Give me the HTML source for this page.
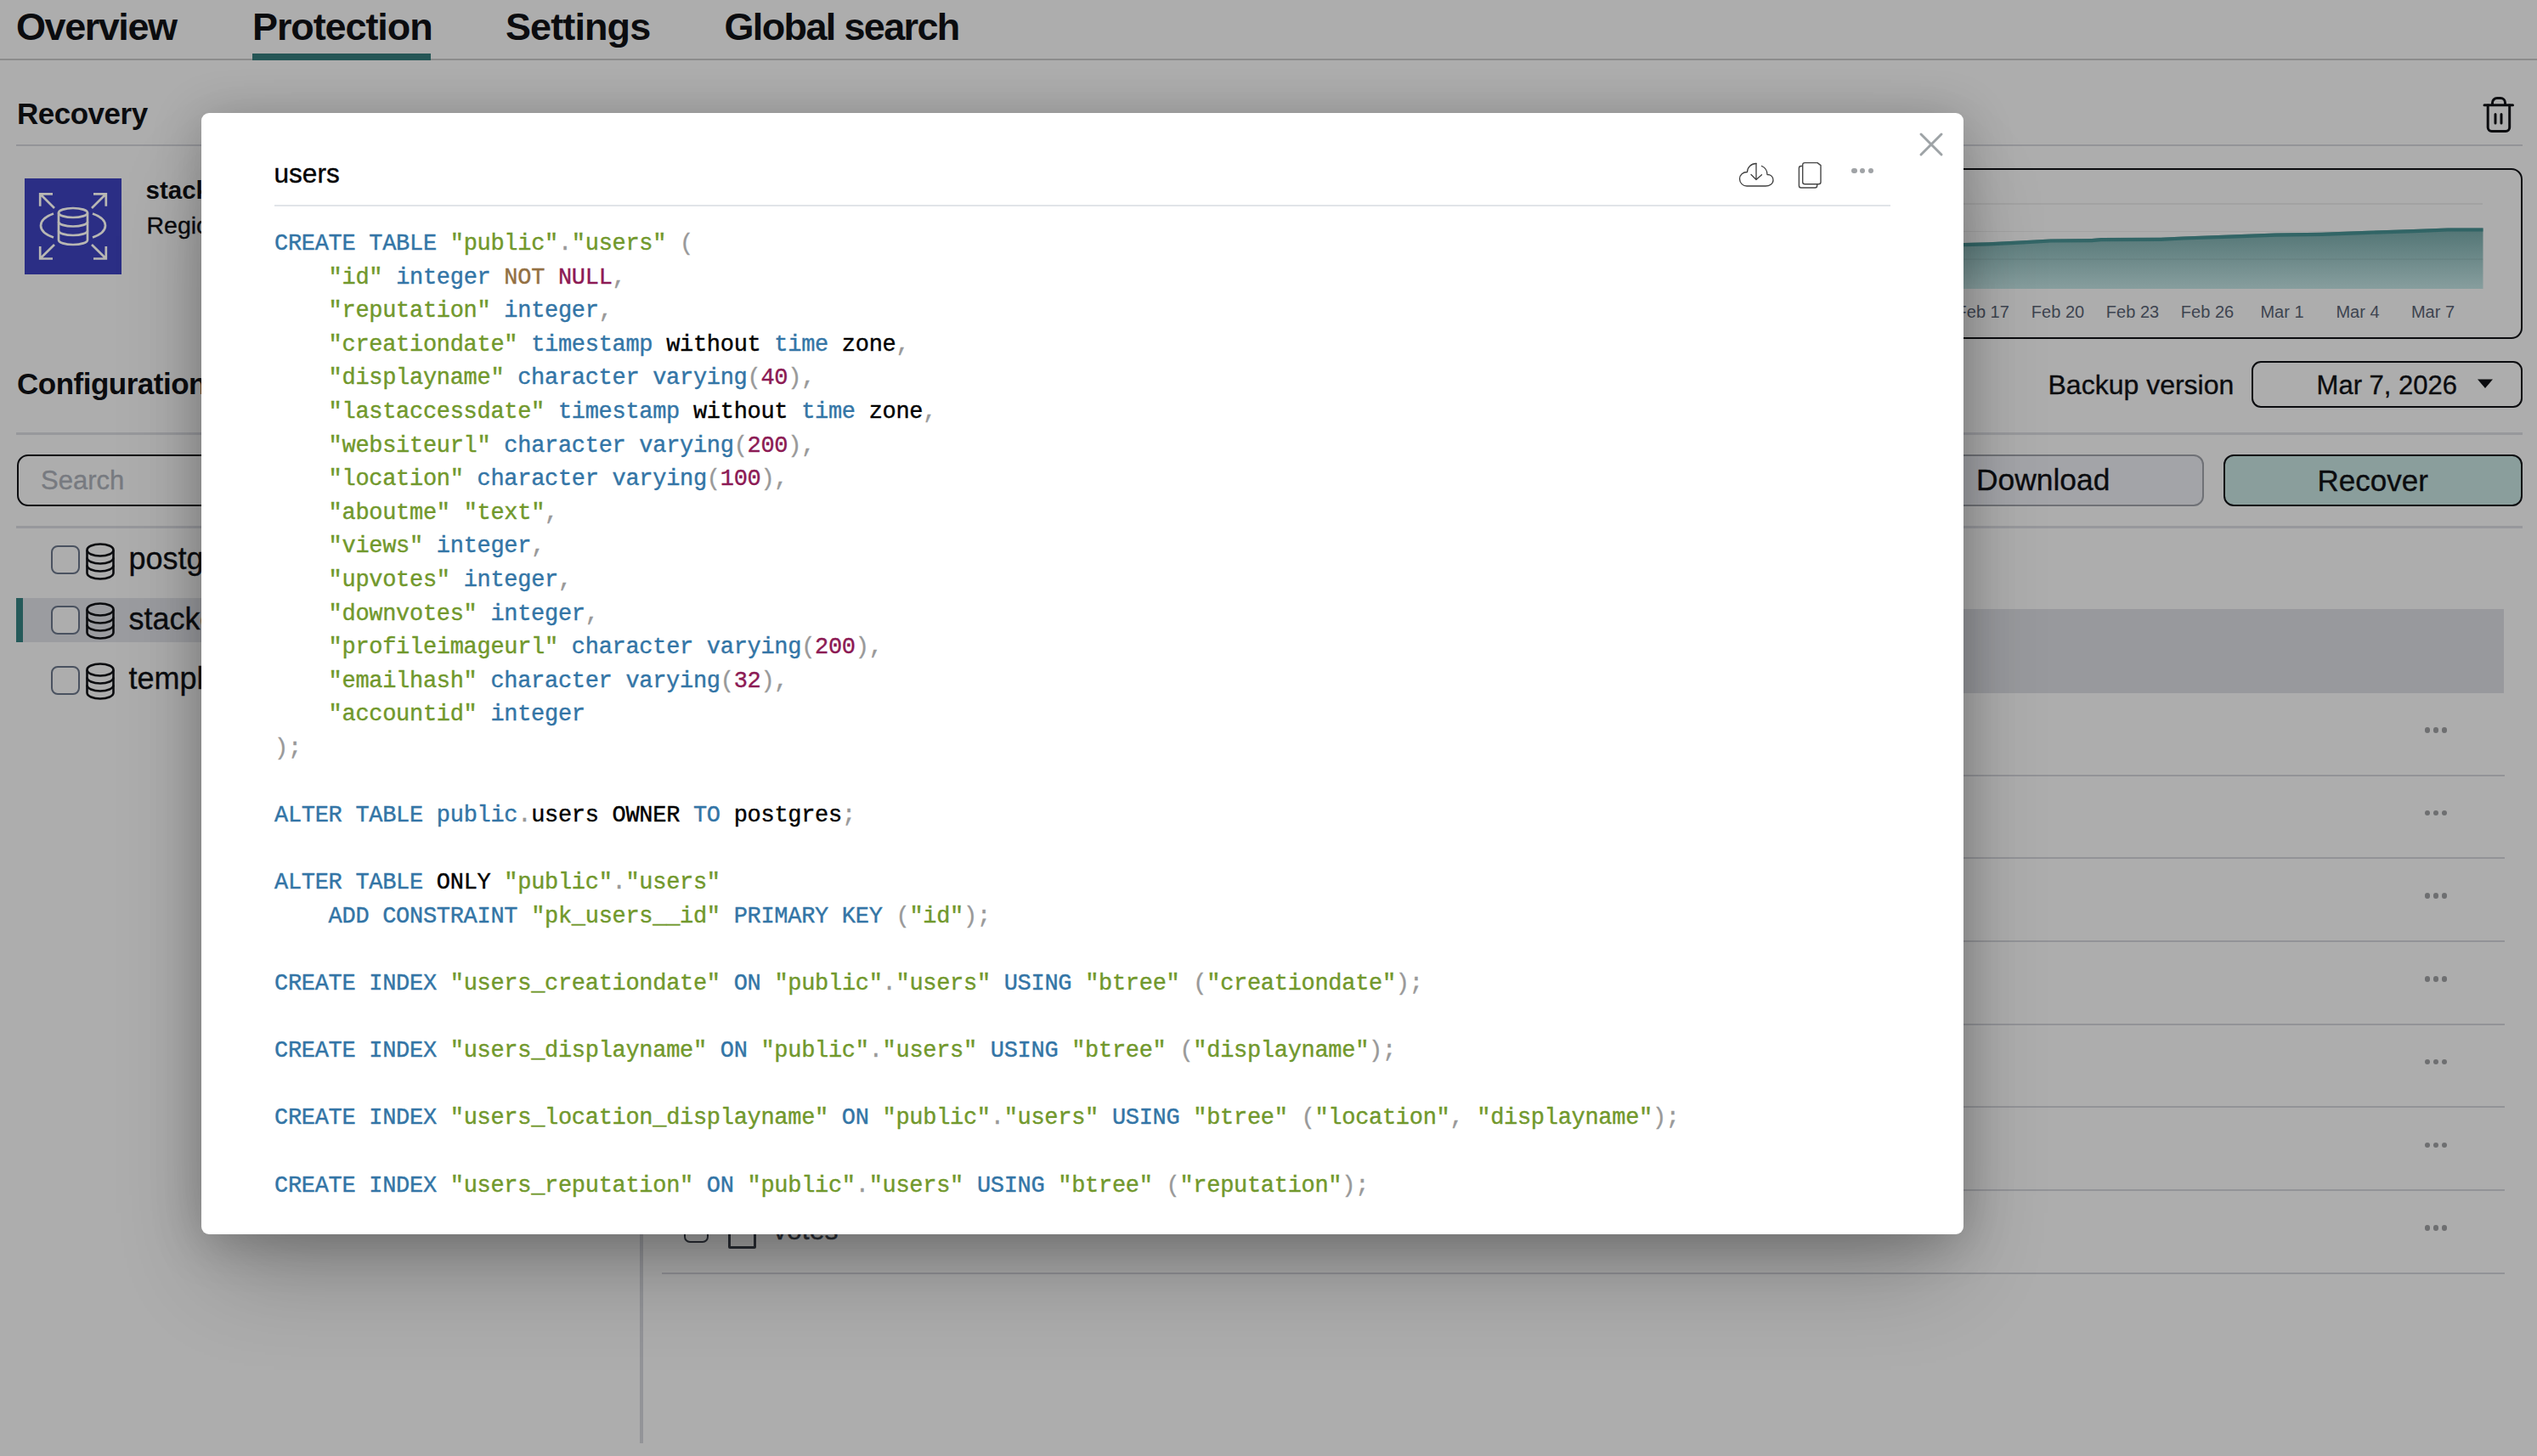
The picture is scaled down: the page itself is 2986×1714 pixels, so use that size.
<!DOCTYPE html>
<html><head><meta charset="utf-8"><title>users</title>
<style>
html,body{margin:0;padding:0;}
body{width:2986px;height:1714px;overflow:hidden;position:relative;background:#adadad;font-family:'Liberation Sans', sans-serif;}
.t{position:absolute;white-space:pre;line-height:1;}
.k{color:#3375a6} .s{color:#71982c} .p{color:#999} .n{color:#8c1a54} .o{color:#937043}
</style></head><body>
<div class="t" style="left:19.0px;top:8.9px;font-size:45px;font-weight:700;color:#0b0c0f;letter-spacing:-1.45px;font-family:'Liberation Sans', sans-serif;">Overview</div>
<div class="t" style="left:297.0px;top:8.9px;font-size:45px;font-weight:700;color:#0b0c0f;letter-spacing:-1.1px;font-family:'Liberation Sans', sans-serif;">Protection</div>
<div class="t" style="left:595.0px;top:8.9px;font-size:45px;font-weight:700;color:#0b0c0f;letter-spacing:-0.9px;font-family:'Liberation Sans', sans-serif;">Settings</div>
<div class="t" style="left:852.5px;top:8.9px;font-size:45px;font-weight:700;color:#0b0c0f;letter-spacing:-1.65px;font-family:'Liberation Sans', sans-serif;">Global search</div>
<div style="position:absolute;left:0.0px;top:69.0px;width:2986.0px;height:2.0px;background:#8c8c8c"></div>
<div style="position:absolute;left:297.0px;top:63.0px;width:210.0px;height:8.0px;background:#255656"></div>
<div class="t" style="left:20.0px;top:116.4px;font-size:35px;font-weight:700;color:#0b0c0f;letter-spacing:-0.5px;font-family:'Liberation Sans', sans-serif;">Recovery</div>
<div style="position:absolute;left:19.0px;top:170.0px;width:2950.0px;height:2.0px;background:#939498"></div>
<svg style="position:absolute;left:2919px;top:111px" width="44" height="48" viewBox="0 0 44 48" fill="none" stroke="#0b0c0f" stroke-width="3" stroke-linecap="round" stroke-linejoin="round">
<path d="M5 12.8H38.5"/><path d="M14.5 12.5V10a5.5 5.5 0 0 1 5.5-5.5h4a5.5 5.5 0 0 1 5.5 5.5v2.5"/>
<path d="M9.2 13v26a4.5 4.5 0 0 0 4.5 4.5h16.5a4.5 4.5 0 0 0 4.5-4.5V13"/><path d="M18 23.5v10.5M25 23.5v10.5"/></svg>
<svg style="position:absolute;left:29px;top:210px" width="114" height="113" viewBox="0 0 114 113">
<rect width="114" height="113" fill="#2b2e85"/>
<g fill="none" stroke="#b8b7b3" stroke-width="2.7">
<path d="M33 18.3H18.2V32.8M18.2 18.3L35 35"/>
<path d="M81 18.3H95.8V32.8M95.8 18.3L79 35"/>
<path d="M33 94.5H18.2V80M18.2 94.5L35 78"/>
<path d="M81 94.5H95.8V80M95.8 94.5L79 78"/>
<ellipse cx="57" cy="40.5" rx="17" ry="5.5"/>
<path d="M40 40.5V72.5A17 5.5 0 0 0 74 72.5V40.5"/>
<path d="M40 51A17 5.5 0 0 0 74 51"/><path d="M40 61.5A17 5.5 0 0 0 74 61.5"/>
<path d="M34 41.5C24 45 19 50 19 55.5C19 61 24 66 34 69.5"/>
<path d="M80 41.5C90 45 95 50 95 55.5C95 61 90 66 80 69.5"/>
</g></svg>
<div class="t" style="left:171.5px;top:209.4px;font-size:29.5px;font-weight:700;color:#0b0c0f;letter-spacing:0px;font-family:'Liberation Sans', sans-serif;">stackoverflow</div>
<div class="t" style="left:172.5px;top:251.3px;font-size:28.5px;font-weight:400;color:#0b0c0f;letter-spacing:0px;font-family:'Liberation Sans', sans-serif;-webkit-text-stroke:0.35px currentColor;">Region: us-east-1</div>
<div style="position:absolute;left:1500px;top:198px;width:1465px;height:197px;border:2.4px solid #0b0c0f;border-radius:13px;box-sizing:content-box"></div>
<div style="position:absolute;left:1500.0px;top:239.0px;width:1422.0px;height:1.5px;background:#a2a2a2"></div>
<div style="position:absolute;left:1500.0px;top:271.5px;width:1422.0px;height:1.5px;background:#a2a2a2"></div>
<svg style="position:absolute;left:1500px;top:250px" width="1430" height="100" viewBox="0 0 1430 100">
<defs><linearGradient id="ag" gradientUnits="userSpaceOnUse" x1="0" y1="18" x2="0" y2="90"><stop offset="0" stop-color="#517474"/><stop offset="1" stop-color="#879e9e"/></linearGradient></defs>
<path d="M0.0 42.0 L811.0 36.0 L840.6 35.2 L881.0 33.3 L913.6 31.4 L962.0 31.1 L973.0 30.0 L1043.0 29.8 L1070.0 28.4 L1124.5 26.5 L1178.6 24.6 L1232.7 23.8 L1286.7 21.7 L1340.8 20.0 L1381.0 18.4 L1422.5 18.4 L1422.5 90.0 L0 90.0 Z" fill="url(#ag)"/><path d="M0.0 42.0 L811.0 36.0 L840.6 35.2 L881.0 33.3 L913.6 31.4 L962.0 31.1 L973.0 30.0 L1043.0 29.8 L1070.0 28.4 L1124.5 26.5 L1178.6 24.6 L1232.7 23.8 L1286.7 21.7 L1340.8 20.0 L1381.0 18.4 L1422.5 18.4 L1422.5 22.6 L1381.0 22.6 L1340.8 24.2 L1286.7 25.9 L1232.7 28.0 L1178.6 28.8 L1124.5 30.7 L1070.0 32.6 L1043.0 34.0 L973.0 34.2 L962.0 35.3 L913.6 35.6 L881.0 37.5 L840.6 39.4 L811.0 40.2 L0.0 46.2 Z" fill="#2c6163" fill-opacity="0.85"/>
<rect x="0" y="54.4" width="1422.5" height="1.4" fill="#000" fill-opacity="0.06"/></svg>
<div class="t" style="left:2185.4px;width:120px;text-align:center;top:357.1px;font-size:20px;color:#3d4450">Feb 14</div>
<div class="t" style="left:2273.7px;width:120px;text-align:center;top:357.1px;font-size:20px;color:#3d4450">Feb 17</div>
<div class="t" style="left:2362px;width:120px;text-align:center;top:357.1px;font-size:20px;color:#3d4450">Feb 20</div>
<div class="t" style="left:2450px;width:120px;text-align:center;top:357.1px;font-size:20px;color:#3d4450">Feb 23</div>
<div class="t" style="left:2538px;width:120px;text-align:center;top:357.1px;font-size:20px;color:#3d4450">Feb 26</div>
<div class="t" style="left:2626px;width:120px;text-align:center;top:357.1px;font-size:20px;color:#3d4450">Mar 1</div>
<div class="t" style="left:2715px;width:120px;text-align:center;top:357.1px;font-size:20px;color:#3d4450">Mar 4</div>
<div class="t" style="left:2803.5px;width:120px;text-align:center;top:357.1px;font-size:20px;color:#3d4450">Mar 7</div>
<div class="t" style="left:20.0px;top:434.4px;font-size:35px;font-weight:700;color:#0b0c0f;letter-spacing:-0.5px;font-family:'Liberation Sans', sans-serif;">Configuration</div>
<div class="t" style="left:2410.5px;top:436.9px;font-size:32px;font-weight:400;color:#0b0c0f;letter-spacing:0px;font-family:'Liberation Sans', sans-serif;-webkit-text-stroke:0.35px currentColor;">Backup version</div>
<div style="position:absolute;left:2650px;top:425px;width:315px;height:50.6px;border:2.2px solid #0b0c0f;border-radius:11px"></div>
<div class="t" style="left:2726.6px;top:437.8px;font-size:31px;font-weight:400;color:#0b0c0f;letter-spacing:0px;font-family:'Liberation Sans', sans-serif;-webkit-text-stroke:0.35px currentColor;">Mar 7, 2026</div>
<svg style="position:absolute;left:2915px;top:445px" width="20" height="13"><path d="M1 1.5H19L10 12Z" fill="#0b0c0f"/></svg>
<div style="position:absolute;left:19.0px;top:509.0px;width:2950.0px;height:3.0px;background:#97989c"></div>
<div style="position:absolute;left:19.5px;top:535px;width:1000px;height:56.6px;border:2.2px solid #0b0c0f;border-radius:13px"></div>
<div class="t" style="left:48.0px;top:549.6px;font-size:31px;font-weight:400;color:#777a80;letter-spacing:0px;font-family:'Liberation Sans', sans-serif;-webkit-text-stroke:0.35px currentColor;">Search</div>
<div style="position:absolute;left:2000px;top:535px;width:590px;height:56.6px;border:2.2px solid #6f7176;border-radius:12px;background:#a3a4a8"></div>
<div class="t" style="left:2326.0px;top:548.0px;font-size:35.4px;font-weight:400;color:#0b0c0f;letter-spacing:0px;font-family:'Liberation Sans', sans-serif;-webkit-text-stroke:0.35px currentColor;">Download</div>
<div style="position:absolute;left:2617px;top:535px;width:347.5px;height:56.6px;border:2.2px solid #0b0c0f;border-radius:12px;background:#8a9e9c"></div>
<div class="t" style="left:2727.5px;top:548.4px;font-size:35px;font-weight:400;color:#0b0c0f;letter-spacing:0px;font-family:'Liberation Sans', sans-serif;-webkit-text-stroke:0.35px currentColor;">Recover</div>
<div style="position:absolute;left:19.0px;top:619.0px;width:2950.0px;height:3.0px;background:#97989c"></div>
<div style="position:absolute;left:19.0px;top:704.0px;width:720.0px;height:51.5px;background:#9b9ca0"></div>
<div style="position:absolute;left:19.0px;top:704.0px;width:8.0px;height:51.5px;background:#255a5a"></div>
<div style="position:absolute;left:60.3px;top:642.4px;width:30px;height:30px;border:2px solid #4a5260;border-radius:8px;background:#adadad"></div>
<svg style="position:absolute;left:100px;top:638.9px" width="36" height="44" viewBox="0 0 36 44" fill="none" stroke="#0b0c0f" stroke-width="2.6">
<ellipse cx="18" cy="8.5" rx="15.5" ry="7"/><path d="M2.5 8.5V35.5A15.5 7 0 0 0 33.5 35.5V8.5"/>
<path d="M2.5 17.5A15.5 7 0 0 0 33.5 17.5"/><path d="M2.5 26.5A15.5 7 0 0 0 33.5 26.5"/></svg>
<div class="t" style="left:151.5px;top:640.2px;font-size:36px;font-weight:400;color:#0b0c0f;letter-spacing:0px;font-family:'Liberation Sans', sans-serif;-webkit-text-stroke:0.35px currentColor;">postgres</div>
<div style="position:absolute;left:60.3px;top:712.9px;width:30px;height:30px;border:2px solid #4a5260;border-radius:8px;background:#adadad"></div>
<svg style="position:absolute;left:100px;top:709.4499999999999px" width="36" height="44" viewBox="0 0 36 44" fill="none" stroke="#0b0c0f" stroke-width="2.6">
<ellipse cx="18" cy="8.5" rx="15.5" ry="7"/><path d="M2.5 8.5V35.5A15.5 7 0 0 0 33.5 35.5V8.5"/>
<path d="M2.5 17.5A15.5 7 0 0 0 33.5 17.5"/><path d="M2.5 26.5A15.5 7 0 0 0 33.5 26.5"/></svg>
<div class="t" style="left:151.5px;top:710.8px;font-size:36px;font-weight:400;color:#0b0c0f;letter-spacing:0px;font-family:'Liberation Sans', sans-serif;-webkit-text-stroke:0.35px currentColor;">stackoverflow</div>
<div style="position:absolute;left:60.3px;top:783.5px;width:30px;height:30px;border:2px solid #4a5260;border-radius:8px;background:#adadad"></div>
<svg style="position:absolute;left:100px;top:780.0px" width="36" height="44" viewBox="0 0 36 44" fill="none" stroke="#0b0c0f" stroke-width="2.6">
<ellipse cx="18" cy="8.5" rx="15.5" ry="7"/><path d="M2.5 8.5V35.5A15.5 7 0 0 0 33.5 35.5V8.5"/>
<path d="M2.5 17.5A15.5 7 0 0 0 33.5 17.5"/><path d="M2.5 26.5A15.5 7 0 0 0 33.5 26.5"/></svg>
<div class="t" style="left:151.5px;top:781.3px;font-size:36px;font-weight:400;color:#0b0c0f;letter-spacing:0px;font-family:'Liberation Sans', sans-serif;-webkit-text-stroke:0.35px currentColor;">template1</div>
<div style="position:absolute;left:753.0px;top:622.0px;width:4.0px;height:1077.0px;background:#939498"></div>
<div style="position:absolute;left:779.0px;top:716.8px;width:2168.0px;height:99.0px;background:#98999d"></div>
<div style="position:absolute;left:779.0px;top:911.6px;width:2169.0px;height:2.0px;background:#929397"></div>
<div style="position:absolute;left:2853.7px;top:856.0px;width:6.6px;height:6.6px;border-radius:50%;background:#6e6f71"></div>
<div style="position:absolute;left:2863.7px;top:856.0px;width:6.6px;height:6.6px;border-radius:50%;background:#6e6f71"></div>
<div style="position:absolute;left:2873.7px;top:856.0px;width:6.6px;height:6.6px;border-radius:50%;background:#6e6f71"></div>
<div style="position:absolute;left:779.0px;top:1009.3px;width:2169.0px;height:2.0px;background:#929397"></div>
<div style="position:absolute;left:2853.7px;top:953.7px;width:6.6px;height:6.6px;border-radius:50%;background:#6e6f71"></div>
<div style="position:absolute;left:2863.7px;top:953.7px;width:6.6px;height:6.6px;border-radius:50%;background:#6e6f71"></div>
<div style="position:absolute;left:2873.7px;top:953.7px;width:6.6px;height:6.6px;border-radius:50%;background:#6e6f71"></div>
<div style="position:absolute;left:779.0px;top:1107.0px;width:2169.0px;height:2.0px;background:#929397"></div>
<div style="position:absolute;left:2853.7px;top:1051.4px;width:6.6px;height:6.6px;border-radius:50%;background:#6e6f71"></div>
<div style="position:absolute;left:2863.7px;top:1051.4px;width:6.6px;height:6.6px;border-radius:50%;background:#6e6f71"></div>
<div style="position:absolute;left:2873.7px;top:1051.4px;width:6.6px;height:6.6px;border-radius:50%;background:#6e6f71"></div>
<div style="position:absolute;left:779.0px;top:1204.7px;width:2169.0px;height:2.0px;background:#929397"></div>
<div style="position:absolute;left:2853.7px;top:1149.1px;width:6.6px;height:6.6px;border-radius:50%;background:#6e6f71"></div>
<div style="position:absolute;left:2863.7px;top:1149.1px;width:6.6px;height:6.6px;border-radius:50%;background:#6e6f71"></div>
<div style="position:absolute;left:2873.7px;top:1149.1px;width:6.6px;height:6.6px;border-radius:50%;background:#6e6f71"></div>
<div style="position:absolute;left:779.0px;top:1302.4px;width:2169.0px;height:2.0px;background:#929397"></div>
<div style="position:absolute;left:2853.7px;top:1246.8px;width:6.6px;height:6.6px;border-radius:50%;background:#6e6f71"></div>
<div style="position:absolute;left:2863.7px;top:1246.8px;width:6.6px;height:6.6px;border-radius:50%;background:#6e6f71"></div>
<div style="position:absolute;left:2873.7px;top:1246.8px;width:6.6px;height:6.6px;border-radius:50%;background:#6e6f71"></div>
<div style="position:absolute;left:779.0px;top:1400.1px;width:2169.0px;height:2.0px;background:#929397"></div>
<div style="position:absolute;left:2853.7px;top:1344.5px;width:6.6px;height:6.6px;border-radius:50%;background:#6e6f71"></div>
<div style="position:absolute;left:2863.7px;top:1344.5px;width:6.6px;height:6.6px;border-radius:50%;background:#6e6f71"></div>
<div style="position:absolute;left:2873.7px;top:1344.5px;width:6.6px;height:6.6px;border-radius:50%;background:#6e6f71"></div>
<div style="position:absolute;left:779.0px;top:1497.8px;width:2169.0px;height:2.0px;background:#929397"></div>
<div style="position:absolute;left:2853.7px;top:1442.2px;width:6.6px;height:6.6px;border-radius:50%;background:#6e6f71"></div>
<div style="position:absolute;left:2863.7px;top:1442.2px;width:6.6px;height:6.6px;border-radius:50%;background:#6e6f71"></div>
<div style="position:absolute;left:2873.7px;top:1442.2px;width:6.6px;height:6.6px;border-radius:50%;background:#6e6f71"></div>
<div style="position:absolute;left:805px;top:1430px;width:25px;height:29px;border:2.4px solid #2a2e35;border-radius:7px"></div>
<div style="position:absolute;left:856.5px;top:1436px;width:27px;height:28px;border:3px solid #2a2e35;border-radius:2px"></div>
<div class="t" style="left:910.0px;top:1432.3px;font-size:32px;font-weight:400;color:#2a2e35;letter-spacing:0px;font-family:'Liberation Sans', sans-serif;-webkit-text-stroke:0.35px currentColor;">votes</div>
<div id="modal" style="position:absolute;left:237px;top:133px;width:2074px;height:1320px;background:#fff;border-radius:9px;box-shadow:0 8px 60px rgba(0,0,0,0.23), 0 60px 110px -20px rgba(0,0,0,0.24)"></div>
<div class="t" style="left:322.5px;top:189.3px;font-size:31.6px;font-weight:400;color:#000;letter-spacing:0px;font-family:'Liberation Sans', sans-serif;-webkit-text-stroke:0.35px currentColor;">users</div>
<div style="position:absolute;left:323.0px;top:241.0px;width:1902.0px;height:2.0px;background:#e1e4e8"></div>
<svg style="position:absolute;left:2257px;top:154px" width="32" height="32" viewBox="0 0 32 32" stroke="#9ea3a6" stroke-width="3" stroke-linecap="round"><path d="M4 4L28 28M28 4L4 28"/></svg>
<svg style="position:absolute;left:2044px;top:189px" width="46" height="34" viewBox="0 0 46 34" fill="none" stroke="#3f3f3f" stroke-width="1.3" stroke-linecap="round" stroke-linejoin="round">
<path d="M23 3.5C17 3.5 12.5 8 12.5 13.5C7.5 13.5 3.5 17 3.5 21.5C3.5 26.5 7.5 30 12 30H34C38.5 30 43 27.5 43 23C43 19 40 16.5 36 16.5C36 12 34 8.5 29.5 6.5"/>
<path d="M23 3.5V22.5M17 16.5L23 22.5L29.5 16.8"/></svg>
<svg style="position:absolute;left:2114px;top:189px" width="34" height="36" viewBox="0 0 34 36" fill="none" stroke="#474747" stroke-width="1.4" stroke-linejoin="round">
<path d="M7.7 5.1A2.5 2.5 0 0 1 10.2 2.6H25L29 5.6V25.3A2.5 2.5 0 0 1 26.5 27.8H10.2A2.5 2.5 0 0 1 7.7 25.3Z"/>
<path d="M7.7 6.5H5.9A2.5 2.5 0 0 0 3.4 9V29.5A2.5 2.5 0 0 0 5.9 32H22.2A2.5 2.5 0 0 0 24.7 29.5V27.8"/></svg>
<div style="position:absolute;left:2179.0px;top:197.9px;width:6.6px;height:6.6px;border-radius:50%;background:#a0a3a6"></div>
<div style="position:absolute;left:2188.9px;top:197.9px;width:6.6px;height:6.6px;border-radius:50%;background:#a0a3a6"></div>
<div style="position:absolute;left:2198.5px;top:197.9px;width:6.6px;height:6.6px;border-radius:50%;background:#a0a3a6"></div>
<pre id="code" style="position:absolute;left:323px;top:268.0px;margin:0;font-family:'Liberation Mono', monospace;font-size:27px;line-height:39.6px;letter-spacing:-0.3026px;color:#000;-webkit-text-stroke:0.4px currentColor"><span class="k">CREATE</span> <span class="k">TABLE</span> <span class="s">&quot;public&quot;</span><span class="p">.</span><span class="s">&quot;users&quot;</span> <span class="p">(</span>
    <span class="s">&quot;id&quot;</span> <span class="k">integer</span> <span class="o">NOT</span> <span class="n">NULL</span><span class="p">,</span>
    <span class="s">&quot;reputation&quot;</span> <span class="k">integer</span><span class="p">,</span>
    <span class="s">&quot;creationdate&quot;</span> <span class="k">timestamp</span> without <span class="k">time</span> zone<span class="p">,</span>
    <span class="s">&quot;displayname&quot;</span> <span class="k">character varying</span><span class="p">(</span><span class="n">40</span><span class="p">),</span>
    <span class="s">&quot;lastaccessdate&quot;</span> <span class="k">timestamp</span> without <span class="k">time</span> zone<span class="p">,</span>
    <span class="s">&quot;websiteurl&quot;</span> <span class="k">character varying</span><span class="p">(</span><span class="n">200</span><span class="p">),</span>
    <span class="s">&quot;location&quot;</span> <span class="k">character varying</span><span class="p">(</span><span class="n">100</span><span class="p">),</span>
    <span class="s">&quot;aboutme&quot;</span> <span class="s">&quot;text&quot;</span><span class="p">,</span>
    <span class="s">&quot;views&quot;</span> <span class="k">integer</span><span class="p">,</span>
    <span class="s">&quot;upvotes&quot;</span> <span class="k">integer</span><span class="p">,</span>
    <span class="s">&quot;downvotes&quot;</span> <span class="k">integer</span><span class="p">,</span>
    <span class="s">&quot;profileimageurl&quot;</span> <span class="k">character varying</span><span class="p">(</span><span class="n">200</span><span class="p">),</span>
    <span class="s">&quot;emailhash&quot;</span> <span class="k">character varying</span><span class="p">(</span><span class="n">32</span><span class="p">),</span>
    <span class="s">&quot;accountid&quot;</span> <span class="k">integer</span>
<span class="p">);</span>

<span class="k">ALTER</span> <span class="k">TABLE</span> <span class="k">public</span><span class="p">.</span>users OWNER <span class="k">TO</span> postgres<span class="p">;</span>

<span class="k">ALTER</span> <span class="k">TABLE</span> ONLY <span class="s">&quot;public&quot;</span><span class="p">.</span><span class="s">&quot;users&quot;</span>
    <span class="k">ADD</span> <span class="k">CONSTRAINT</span> <span class="s">&quot;pk_users__id&quot;</span> <span class="k">PRIMARY KEY</span> <span class="p">(</span><span class="s">&quot;id&quot;</span><span class="p">);</span>

<span class="k">CREATE</span> <span class="k">INDEX</span> <span class="s">&quot;users_creationdate&quot;</span> <span class="k">ON</span> <span class="s">&quot;public&quot;</span><span class="p">.</span><span class="s">&quot;users&quot;</span> <span class="k">USING</span> <span class="s">&quot;btree&quot;</span> <span class="p">(</span><span class="s">&quot;creationdate&quot;</span><span class="p">);</span>

<span class="k">CREATE</span> <span class="k">INDEX</span> <span class="s">&quot;users_displayname&quot;</span> <span class="k">ON</span> <span class="s">&quot;public&quot;</span><span class="p">.</span><span class="s">&quot;users&quot;</span> <span class="k">USING</span> <span class="s">&quot;btree&quot;</span> <span class="p">(</span><span class="s">&quot;displayname&quot;</span><span class="p">);</span>

<span class="k">CREATE</span> <span class="k">INDEX</span> <span class="s">&quot;users_location_displayname&quot;</span> <span class="k">ON</span> <span class="s">&quot;public&quot;</span><span class="p">.</span><span class="s">&quot;users&quot;</span> <span class="k">USING</span> <span class="s">&quot;btree&quot;</span> <span class="p">(</span><span class="s">&quot;location&quot;</span><span class="p">, </span><span class="s">&quot;displayname&quot;</span><span class="p">);</span>

<span class="k">CREATE</span> <span class="k">INDEX</span> <span class="s">&quot;users_reputation&quot;</span> <span class="k">ON</span> <span class="s">&quot;public&quot;</span><span class="p">.</span><span class="s">&quot;users&quot;</span> <span class="k">USING</span> <span class="s">&quot;btree&quot;</span> <span class="p">(</span><span class="s">&quot;reputation&quot;</span><span class="p">);</span></pre>
</body></html>
